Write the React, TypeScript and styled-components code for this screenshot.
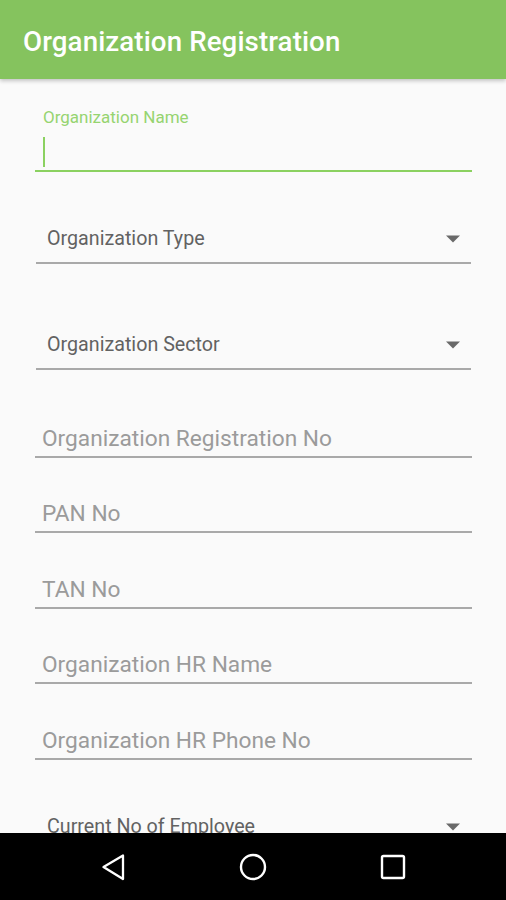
import React from "react"
import styled, { createGlobalStyle } from "styled-components"

const GlobalStyle = createGlobalStyle`
  html, body {
    margin: 0;
    padding: 0;
    background: #fafafa;
  }
  * {
    box-sizing: border-box;
  }
`

const colors = {
  primary: "#85c35e",
  accent: "#8bd160",
  accentLabel: "#96d470",
  hint: "#9b9b9b",
  text: "#626262",
  line: "#a9a9a9",
  arrow: "#696969",
}

const Screen = styled.div`
  display: flex;
  flex-direction: column;
  width: 506px;
  height: 900px;
  background: #fafafa;
  font-family: Roboto, "Noto Sans", sans-serif;
  overflow: hidden;
`

const AppBar = styled.header`
  position: relative;
  z-index: 2;
  flex: 0 0 79px;
  padding: 26px 0 0 23px;
  background: ${colors.primary};
  box-shadow: 0 2px 4px rgba(0, 0, 0, 0.22);
`

const Title = styled.h1`
  margin: 0;
  color: #ffffff;
  font-size: 27.7px;
  font-weight: 500;
  line-height: 32px;
  letter-spacing: 0.1px;
`

const Form = styled.main`
  flex: 1;
  display: flex;
  flex-direction: column;
  padding: 0 34px 0 35px;
  overflow: hidden;
`

const FocusedField = styled.div`
  display: flex;
  flex-direction: column;
  margin-top: 28px;
`

const FloatingLabel = styled.label`
  padding-left: 8px;
  color: ${colors.accentLabel};
  font-size: 17px;
  line-height: 20px;
`

const ActiveInput = styled.div`
  display: flex;
  align-items: flex-end;
  height: 44.6px;
  padding: 0 0 3px 8px;
  border-bottom: 2px solid ${colors.accent};
`

const Caret = styled.span`
  width: 2px;
  height: 30px;
  background: ${colors.accent};
`

const Spinner = styled.div<{ $gap: number }>`
  display: flex;
  align-items: center;
  justify-content: space-between;
  margin: ${p => p.$gap}px 1px 0;
  padding: 0 11px 11px 11px;
  border-bottom: 2px solid ${colors.line};
`

const SpinnerText = styled.span`
  color: ${colors.text};
  font-size: 19.7px;
  line-height: 24px;
`

const TextField = styled.div<{ $gap: number }>`
  margin-top: ${p => p.$gap}px;
  padding: 0 0 4px 7px;
  border-bottom: 2px solid ${colors.line};
`

const Hint = styled.span`
  display: block;
  color: ${colors.hint};
  font-size: 22.7px;
  line-height: 26px;
`

const NavBar = styled.nav`
  flex: 0 0 67px;
  display: flex;
  justify-content: center;
  align-items: center;
  background: #000000;
`

const NavButton = styled.div`
  display: flex;
  justify-content: center;
  align-items: center;
  width: 140px;
  height: 100%;
`

const Arrow: React.FC = () => (
  <svg width="14" height="8" viewBox="0 0 14 8">
    <polygon points="0,0.5 14,0.5 7,7.5" fill={colors.arrow} />
  </svg>
)

interface SpinnerProps {
  label: string
  gap: number
}

const SpinnerField: React.FC<SpinnerProps> = ({ label, gap }: SpinnerProps) => (
  <Spinner $gap={gap}>
    <SpinnerText>{label}</SpinnerText>
    <Arrow />
  </Spinner>
)

interface HintProps {
  label: string
  gap: number
}

const HintField: React.FC<HintProps> = ({ label, gap }: HintProps) => (
  <TextField $gap={gap}>
    <Hint>{label}</Hint>
  </TextField>
)

const App: React.FC = () => {
  return (
    <Screen>
      <GlobalStyle />
      <AppBar>
        <Title>Organization Registration</Title>
      </AppBar>
      <Form>
        <FocusedField>
          <FloatingLabel>Organization Name</FloatingLabel>
          <ActiveInput>
            <Caret />
          </ActiveInput>
        </FocusedField>
        <SpinnerField label="Organization Type" gap={55} />
        <SpinnerField label="Organization Sector" gap={69} />
        <HintField label="Organization Registration No" gap={56} />
        <HintField label="PAN No" gap={43.5} />
        <HintField label="TAN No" gap={43.5} />
        <HintField label="Organization HR Name" gap={43.5} />
        <HintField label="Organization HR Phone No" gap={43.5} />
        <SpinnerField label="Current No of Employee" gap={55} />
      </Form>
      <NavBar>
        <NavButton>
          <svg width="28" height="28" viewBox="0 0 28 28">
            <polygon
              points="4.5,14 24,2.5 24,26"
              fill="none"
              stroke="#ffffff"
              strokeWidth="2.3"
              strokeLinejoin="round"
            />
          </svg>
        </NavButton>
        <NavButton>
          <svg width="28" height="28" viewBox="0 0 28 28">
            <circle cx="14" cy="14" r="12" fill="none" stroke="#ffffff" strokeWidth="2.4" />
          </svg>
        </NavButton>
        <NavButton>
          <svg width="28" height="28" viewBox="0 0 28 28">
            <rect
              x="3"
              y="3"
              width="22"
              height="22"
              rx="1.5"
              fill="none"
              stroke="#ffffff"
              strokeWidth="2.4"
            />
          </svg>
        </NavButton>
      </NavBar>
    </Screen>
  )
}

export default App
